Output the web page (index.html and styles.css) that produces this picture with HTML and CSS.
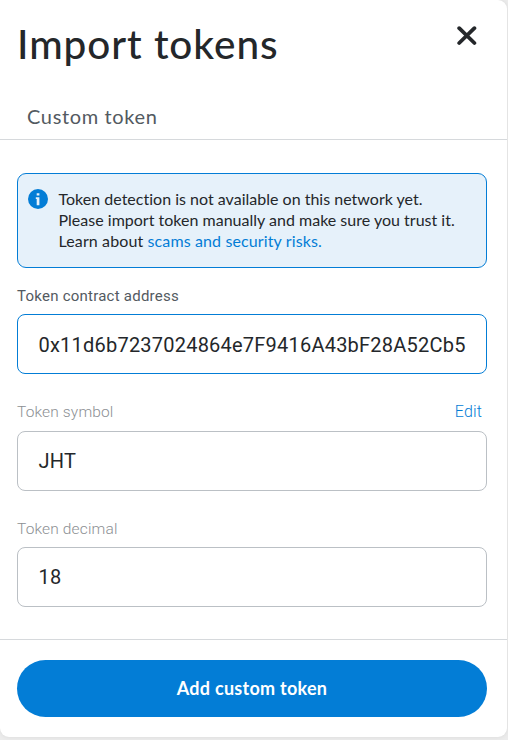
FILE: index.html
```html
<!DOCTYPE html>
<html lang="en">
<head>
<meta charset="utf-8">
<title>Import tokens</title>
<link rel="stylesheet" href="styles.css">
</head>
<body>
<main class="card">
  <header class="header">
    <h1 class="title"><span>Import tokens</span></h1>
    <button class="close" aria-label="Close"><svg width="20" height="20" viewBox="0 0 20 20"><path d="M2.2 2.2 17.4 17M17.4 2.2 2.2 17" fill="none" stroke="#24272a" stroke-width="3.8" stroke-linecap="round"/></svg></button>
  </header>
  <nav class="tabs"><span class="tab">Custom token</span></nav>
  <section class="content">
    <div class="notice">
      <svg class="info" width="20" height="20" viewBox="0 0 20 20"><circle cx="10" cy="10" r="10" fill="#037dd6"/><path d="M8.7 4.2h2.7v2.4H8.7zM7.8 8.2h3.6v8H8.7v-6.2H7.8z" fill="#e6f1fa"/></svg>
      <p class="message"><span class="l1">Token detection is not available on this network yet.</span><br><span class="l2">Please import token manually and make sure you trust it.</span><br><span class="l3">Learn about <a class="link">scams and security risks.</a></span></p>
    </div>
    <div class="field address">
      <div class="label"><span>Token contract address</span></div>
      <div class="input"><span>0x11d6b7237024864e7F9416A43bF28A52Cb5</span></div>
    </div>
    <div class="field symbol">
      <div class="label"><span>Token symbol</span><a class="edit">Edit</a></div>
      <div class="input"><span>JHT</span></div>
    </div>
    <div class="field decimal">
      <div class="label"><span>Token decimal</span></div>
      <div class="input"><span>18</span></div>
    </div>
  </section>
  <footer class="footer"><button class="submit"><span>Add custom token</span></button></footer>
</main>
</body>
</html>
```

FILE: styles.css
```css
* { box-sizing: border-box; }
body {
  margin: 0;
  height: 740px;
  overflow: hidden;
  background: #ececec;
  font-family: Lato, sans-serif;
  color: #24272a;
}
.card {
  width: 507px;
  height: 737px;
  background: #fff;
  border-radius: 0 9px 9px 9px;
  box-shadow: 0 0 5px rgba(0, 0, 0, .08);
}
.header { display: flex; justify-content: space-between; height: 96px; }
.title {
  margin: 19px 0 0 17px;
  font-size: 40.5px;
  line-height: 50px;
  font-weight: 500;
  letter-spacing: .95px;
  white-space: nowrap;
}
.close { width: 20px; height: 20px; margin: 26px 30px 0 0; padding: 0; border: 0; background: none; }
.close svg, .info { display: block; flex: none; }
.tabs { height: 44px; padding: 8px 27px 0; border-bottom: 1px solid #d6d9dc; }
.tab { display: block; font-size: 20px; line-height: 24px; letter-spacing: .65px; color: #535a61; }
.content { padding: 33px 20px 0 17px; }
.notice {
  display: flex;
  height: 95px;
  padding: 15px 10px 0;
  border: 1px solid #037dd6;
  border-radius: 9px;
  background: #e6f1fa;
}
.message { margin: -1px 0 0 10.5px; font-size: 16px; line-height: 21px; white-space: nowrap; }
.l1, .l2 { letter-spacing: .01px; }
.l3 { letter-spacing: .12px; }
.link, .edit { color: #037dd6; }
.label {
  display: flex;
  justify-content: space-between;
  font: 300 15.5px/20px Roboto, sans-serif;
  letter-spacing: .15px;
  color: #8c8f93;
}
.address .label { font-weight: 400; font-size: 15px; letter-spacing: .24px; color: #535a61; }
.input {
  display: flex;
  align-items: center;
  height: 60px;
  padding: 0 20.5px;
  border: 1px solid #bbc0c5;
  border-radius: 8px;
  font: 400 20px/24px Roboto, sans-serif;
  letter-spacing: .22px;
}
.address { margin-top: 18px; }
.address .input { margin-top: 8px; padding-top: 1px; border-color: #037dd6; }
.symbol { margin-top: 28px; }
.symbol .input { margin-top: 9px; }
.decimal { margin-top: 28px; }
.decimal .input { margin-top: 8px; }
.edit { margin-right: 5px; font-weight: 350; font-size: 16px; }
.footer { margin-top: 32px; padding: 20px 20px 0 17px; border-top: 1px solid #d6d9dc; }
.submit {
  display: block;
  width: 470px;
  height: 57px;
  padding: 0 0 2px;
  border: 0;
  border-radius: 29px;
  background: #037dd6;
  color: #fff;
  font: 700 18px/24px Lato, sans-serif;
  letter-spacing: .27px;
}
```
